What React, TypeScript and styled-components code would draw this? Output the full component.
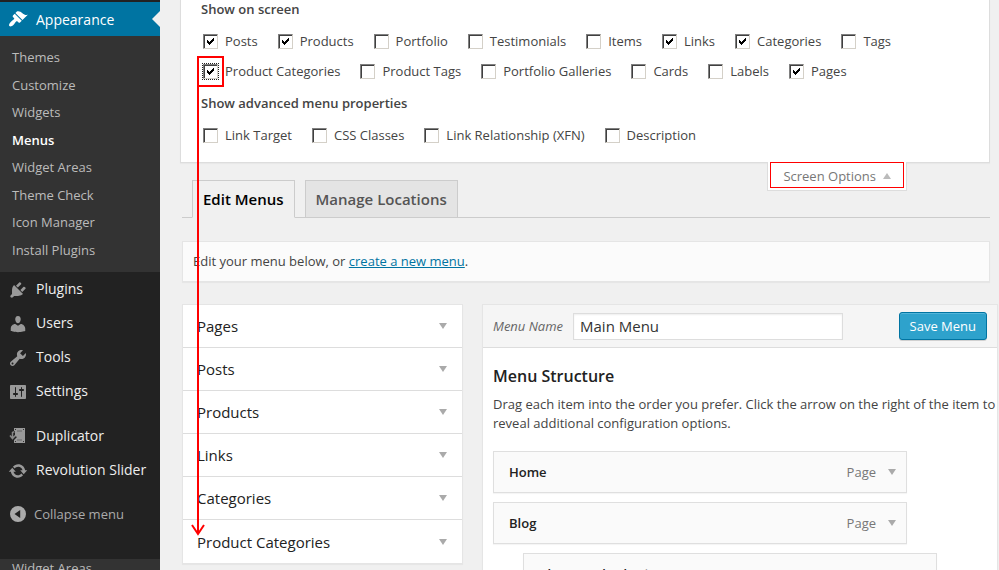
import React, { ReactNode } from 'react';
import styled, { createGlobalStyle, css } from 'styled-components';

const GlobalStyle = createGlobalStyle`
  *, *::before, *::after { box-sizing: border-box; }
  body {
    margin: 0;
    overflow: hidden;
    background: #f0f0f0;
    color: #444;
    font: 13px/19px "Open Sans", sans-serif;
  }
  button, input { font-family: inherit; }
  h2, h3, p, ul { margin: 0; padding: 0; }
  ul { list-style: none; }
`;

const Page = styled.div`
  display: flex;
  height: 100vh;
  overflow: hidden;
`;

/* ---------- Sidebar ---------- */

const Sidebar = styled.nav`
  flex: 0 0 160px;
  padding-top: 2px;
  background: #222;
  overflow: hidden;
`;

const MenuLink = styled.a<{ $current?: boolean }>`
  position: relative;
  display: flex;
  align-items: center;
  gap: 8px;
  height: 34px;
  padding-left: 8px;
  color: ${(p) => (p.$current ? '#fff' : '#eee')};
  background: ${(p) => (p.$current ? '#0074a2' : 'transparent')};
  font-size: 14px;
  white-space: nowrap;
  text-decoration: none;

  ${(p) =>
    p.$current &&
    css`
      &::after {
        content: '';
        position: absolute;
        right: 0;
        top: 9px;
        border: 8px solid transparent;
        border-left-width: 0;
        border-right-color: #f0f0f0;
      }
    `}
`;

const MenuLabel = styled.span`
  padding-bottom: 2px;
`;

const MenuIcon = styled.svg`
  flex: none;
  width: 20px;
  height: 20px;
`;

const Submenu = styled.ul`
  display: grid;
  grid-auto-rows: 1fr;
  height: 236px;
  padding: 7px 0 9px;
  background: #333;
`;

const SubLink = styled.a<{ $active?: boolean }>`
  display: block;
  padding: 5px 12px 4px;
  line-height: 18px;
  color: ${(p) => (p.$active ? '#fff' : '#bbb')};
  font-weight: ${(p) => (p.$active ? 600 : 400)};
  text-decoration: none;
`;

const MenuGap = styled.div`
  height: 11px;
`;

const CollapseButton = styled.button`
  display: flex;
  align-items: center;
  gap: 6px;
  width: 100%;
  height: 34px;
  margin: 10px 0 28px;
  padding: 0 0 0 8px;
  border: 0;
  background: none;
  color: #aaa;
  font-size: 13px;
`;

const SubmenuTail = styled.div`
  background: #333;

  a { padding-top: 0; }
`;

/* ---------- Content ---------- */

const Content = styled.main`
  flex: 1;
  min-width: 0;
`;

const ScreenMeta = styled.section`
  margin: 0 9px 0 20px;
  padding: 0 20px 12px;
  border: solid #ddd;
  border-width: 0 1px 1px;
  background: #fff;
  box-shadow: 0 1px 1px rgba(0, 0, 0, 0.03);
`;

const OptionGroup = styled.fieldset`
  margin: 0;
  padding: 0 0 0 2px;
  border: 0;

  & + & { margin-top: 8px; }
`;

const OptionLegend = styled.legend`
  margin-left: -2px;
  padding: 0 0 7px;
  font-weight: 600;
`;

const OptionList = styled.div`
  display: flex;
  flex-wrap: wrap;
  column-gap: 20px;
`;

const Option = styled.label`
  position: relative;
  display: flex;
  align-items: center;
  gap: 7px;
  height: 30px;
  white-space: nowrap;
`;

const Checkbox = styled.input<{ $focused?: boolean }>`
  appearance: none;
  flex: none;
  width: 15px;
  height: 15px;
  margin: 0;
  border: 1px solid;
  border-color: #808080 #d4d0c8 #d4d0c8 #808080;
  background: #fff center / 7px 7px no-repeat;
  box-shadow: inset 1px 1px 0 #404040;

  &:checked {
    background-image: url("data:image/svg+xml,%3Csvg xmlns='http://www.w3.org/2000/svg' viewBox='0 0 7 7' shape-rendering='crispEdges'%3E%3Cpath d='M0 2h1v1h1v1h1v-1h1v-1h1v-1h1v-1h1v3h-1v1h-1v1h-1v1h-1v1h-1v-1h-1v-1h-1z'/%3E%3C/svg%3E");
  }

  ${(p) =>
    p.$focused &&
    css`
      outline: 1px dotted #222;
    `}
`;

/* Red frame round the option, with an arrow running down to its box below */
const Callout = styled.span`
  position: absolute;
  z-index: 2;
  left: -6px;
  top: 0;
  width: 27px;
  height: 31px;
  border: 2px solid #f00;
  pointer-events: none;
`;

const CalloutArrow = styled.svg`
  position: absolute;
  left: -8px;
  top: 27px;
  width: 16px;
  height: 452px;
`;

const MetaTabRow = styled.div`
  display: flex;
  justify-content: flex-end;
  height: 18px;
  margin: -1px 92px 0 0;
`;

const MetaTab = styled.div`
  align-self: flex-start;
  position: relative;
  padding: 0 2px 2px;
  border: solid #ddd;
  border-width: 0 1px 1px;
  background: #fff;
`;

const MetaButton = styled.button`
  display: flex;
  align-items: center;
  gap: 7px;
  height: 26px;
  padding: 1px 12px 0;
  border: 1px solid #f00;
  background: #fff;
  color: #777;
  font-size: 13px;
`;

const Arrow = styled.span<{ $up?: boolean }>`
  flex: none;
  border: solid transparent;
  border-width: ${(p) => (p.$up ? '0 4px 6px' : '6px 4px 0')};
  border-${(p) => (p.$up ? 'bottom' : 'top')}-color: ${(p) => (p.$up ? '#bbb' : '#aaa')};
`;

const Tabs = styled.div`
  display: flex;
  gap: 10px;
  margin: 0 9px 23px 22px;
  padding-left: 10px;
  border-bottom: 1px solid #ccc;
`;

const Tab = styled.a<{ $active?: boolean }>`
  margin-bottom: -1px;
  padding: 6px 10px;
  border: 1px solid #ccc;
  border-bottom-color: ${(p) => (p.$active ? '#f0f0f0' : '#ccc')};
  background: ${(p) => (p.$active ? '#f0f0f0' : '#e4e4e4')};
  color: ${(p) => (p.$active ? '#000' : '#555')};
  font-size: 15px;
  font-weight: 600;
  line-height: 24px;
  text-decoration: none;
`;

const Notice = styled.p`
  margin: 0 9px 22px 22px;
  padding: 10px;
  border: 1px solid #e5e5e5;
  background: #fbfbfb;
  box-shadow: 0 1px 1px rgba(0, 0, 0, 0.04);

  a { color: #0074a2; }
`;

const Columns = styled.div`
  display: grid;
  grid-template-columns: 281px 1fr;
  gap: 19px;
  align-items: start;
  margin: 0 1px 0 22px;
`;

const panel = css`
  border: 1px solid #e5e5e5;
  background: #fff;
  box-shadow: 0 1px 1px rgba(0, 0, 0, 0.04);
`;

const Accordion = styled.div`
  ${panel}
`;

const AccordionButton = styled.button`
  display: flex;
  align-items: center;
  justify-content: space-between;
  width: 100%;
  height: 43px;
  padding: 0 15px 0 14px;
  border: 0;
  border-bottom: 1px solid #ddd;
  background: #fff;
  color: #222;
  font-size: 15px;

  &:last-child {
    border-bottom: 0;
  }
`;

const Editor = styled.section`
  ${panel}
`;

const EditorHeader = styled.header`
  display: flex;
  align-items: center;
  height: 43px;
  padding: 0 10px;
  border-bottom: 1px solid #ddd;
  background: #f5f5f5;
`;

const NameLabel = styled.label`
  color: #666;
  font-style: italic;
`;

const NameInput = styled.input`
  width: 270px;
  height: 27px;
  margin-left: 10px;
  padding: 0 6px;
  border: 1px solid #ddd;
  background: #fff;
  box-shadow: inset 0 1px 2px rgba(0, 0, 0, 0.07);
  color: #333;
  font-size: 15px;
`;

const SaveButton = styled.button`
  height: 28px;
  margin-left: auto;
  padding: 0 10px;
  border: 1px solid #0074a2;
  border-radius: 3px;
  background: #2ea2cc;
  box-shadow: inset 0 1px 0 rgba(120, 200, 230, 0.5), 0 1px 0 rgba(0, 0, 0, 0.15);
  color: #fff;
  font-size: 13px;
`;

const EditorBody = styled.div`
  padding: 16px 0 16px 10px;
`;

const EditorTitle = styled.h3`
  margin-bottom: 7px;
  color: #222;
  font-size: 16px;
  font-weight: 600;
  line-height: 24px;
`;

const ItemList = styled.ul`
  display: grid;
  gap: 9px;
  margin-top: 18px;
`;

const MenuItem = styled.li<{ $depth?: number }>`
  display: flex;
  align-items: center;
  width: 414px;
  height: 42px;
  margin-left: ${(p) => (p.$depth ?? 0) * 30}px;
  padding: 0 10px 0 15px;
  border: 1px solid #dfdfdf;
  background: #fafafa;
  box-shadow: 0 1px 1px rgba(0, 0, 0, 0.04);
`;

const ItemTitle = styled.span`
  flex: 1;
  color: #222;
  font-weight: 600;
`;

const SubItem = styled.span`
  color: #999;
  font-style: italic;
  font-weight: 400;
`;

const ItemType = styled.span`
  margin-right: 12px;
  color: #777;
`;

/* ---------- Icons ---------- */

const Icon = ({ children, color = '#999' }: { children: ReactNode; color?: string }) => (
  <MenuIcon viewBox="0 0 20 20" fill={color} aria-hidden="true">
    {children}
  </MenuIcon>
);

const brush = (
  <path d="M14.48 11.06L7.41 3.99l1.5-1.5c.5-.56 2.3-.47 3.51.32 1.21.8 1.43 1.28 2.91 2.1 1.18.64 2.45 1.26 4.45.85zm-.71.71L6.7 4.7 4.93 6.47c-.39.39-.39 1.02 0 1.41l1.06 1.06c.39.39.39 1.03 0 1.42-.6.6-1.43 1.11-2.21 1.69-.35.26-.7.53-1.01.84C1.43 14.23.4 16.08 1.4 17.07c.99 1 2.84-.03 4.18-1.36.31-.31.58-.66.85-1.02.57-.78 1.08-1.61 1.69-2.21.39-.39 1.02-.39 1.41 0l1.06 1.06c.39.39 1.02.39 1.41 0z" />
);
const plug = (
  <path transform="translate(0 1)" d="M13.11 4.36L9.87 7.6 8 5.73l3.24-3.24c.35-.34 1.05-.2 1.56.32.52.51.66 1.21.31 1.55zm-8 1.77l.91-1.12 9.01 9.01-1.19.84c-.71.71-2.63 1.16-3.82 1.16H6.14L4.9 17.26c-.59.59-1.54.59-2.12 0-.59-.58-.59-1.53 0-2.12l1.24-1.24v-3.88c0-1.13.4-3.19 1.09-3.89zm7.26 3.97l3.24-3.24c.34-.35 1.04-.21 1.55.31.52.51.66 1.21.31 1.55l-3.24 3.25z" />
);
const user = (
  <path transform="translate(0 1)" d="M10 9.25c-2.27 0-2.73-3.44-2.73-3.44C7 4.02 7.82 2 9.97 2c2.16 0 2.98 2.02 2.71 3.81 0 0-.41 3.44-2.68 3.44zm0 2.57L12.72 10c2.39 0 4.52 2.33 4.52 4.53v2.49s-3.65 1.13-7.24 1.13c-3.65 0-7.24-1.13-7.24-1.13v-2.49c0-2.25 1.94-4.48 4.47-4.48z" />
);
const wrench = (
  <path transform="translate(0 1)" d="M16.68 9.77c-1.34 1.34-3.3 1.67-4.95.99l-5.41 6.52c-.99.99-2.59.99-3.58 0s-.99-2.59 0-3.57l6.52-5.42c-.68-1.65-.35-3.61.99-4.95 1.28-1.28 3.12-1.62 4.72-1.06l-2.89 2.89 2.82 2.82 2.86-2.87c.53 1.58.18 3.39-1.08 4.65zM3.81 16.21c.4.39 1.04.39 1.43 0 .4-.4.4-1.04 0-1.43-.39-.4-1.03-.4-1.43 0-.39.39-.39 1.03 0 1.43z" />
);
const sliders = (
  <path transform="translate(0 1)" d="M18 16V4c0-.55-.45-1-1-1H3c-.55 0-1 .45-1 1v12c0 .55.45 1 1 1h14c.55 0 1-.45 1-1zM8 11h1c.55 0 1 .45 1 1s-.45 1-1 1H8v1.5c0 .28-.22.5-.5.5s-.5-.22-.5-.5V13H6c-.55 0-1-.45-1-1s.45-1 1-1h1V5.5c0-.28.22-.5.5-.5s.5.22.5.5V11zm5-2h-1c-.55 0-1-.45-1-1s.45-1 1-1h1V5.5c0-.28.22-.5.5-.5s.5.22.5.5V7h1c.55 0 1 .45 1 1s-.45 1-1 1h-1v5.5c0 .28-.22.5-.5.5s-.5-.22-.5-.5V9z" />
);
const duplicator = (
  <>
    <path d="M6 2h11v15H6v-3l3-3-2-1V5H6z" />
    <path d="M4.500 6v6M2 9.500l2.500 3 2.800-3M4.500 6h2" fill="none" stroke="#888" strokeWidth="1.500" />
    <path d="M9 5h5M9 14h5" stroke="#666" fill="none" />
    <path d="M7 3h1v1H7zM15 3h1v1h-1zM15 15h1v1h-1zM7 15h1v1H7z" fill="#333" />
  </>
);
const cycle = (
  <path transform="translate(0 1)" d="M10.200 3.280c3.530 0 6.430 2.610 6.920 6h2.080l-3.500 4-3.500-4h2.320c-.450-1.970-2.210-3.450-4.320-3.450-1.450 0-2.730.71-3.540 1.780L4.950 5.660C6.230 4.200 8.110 3.280 10.200 3.280zm-.4 13.440c-3.520 0-6.430-2.610-6.920-6H.8l3.500-4c1.170 1.330 2.330 2.670 3.500 4H5.480c.45 1.970 2.210 3.450 4.320 3.450 1.450 0 2.730-.71 3.540-1.780l1.710 1.950c-1.280 1.460-3.150 2.380-5.250 2.380z" />
);
const collapse = (
  <path
    fillRule="evenodd"
    d="M10 2a8 8 0 1 0 0 16 8 8 0 0 0 0-16zM12.200 6v8L6.500 10z"
  />
);

/* ---------- Data ---------- */

const appearanceLinks = [
  'Themes', 'Customize', 'Widgets', 'Menus', 'Widget Areas', 'Theme Check', 'Icon Manager', 'Install Plugins',
];

const coreLinks: [string, ReactNode][] = [
  ['Plugins', plug],
  ['Users', user],
  ['Tools', wrench],
  ['Settings', sliders],
];

const pluginLinks: [string, ReactNode][] = [
  ['Duplicator', duplicator],
  ['Revolution Slider', cycle],
];

type ScreenOption = { label: string; on?: boolean; marked?: boolean };

const screenOptions: ScreenOption[] = [
  { label: 'Posts', on: true },
  { label: 'Products', on: true },
  { label: 'Portfolio' },
  { label: 'Testimonials' },
  { label: 'Items' },
  { label: 'Links', on: true },
  { label: 'Categories', on: true },
  { label: 'Tags' },
  { label: 'Product Categories', on: true, marked: true },
  { label: 'Product Tags' },
  { label: 'Portfolio Galleries' },
  { label: 'Cards' },
  { label: 'Labels' },
  { label: 'Pages', on: true },
];

const advancedOptions: ScreenOption[] = [
  { label: 'Link Target' },
  { label: 'CSS Classes' },
  { label: 'Link Relationship (XFN)' },
  { label: 'Description' },
];

const boxes = ['Pages', 'Posts', 'Products', 'Links', 'Categories', 'Product Categories'];

const Options = ({ title, items }: { title: string; items: ScreenOption[] }) => (
  <OptionGroup>
    <OptionLegend>{title}</OptionLegend>
    <OptionList>
      {items.map((o) => (
        <Option key={o.label}>
          <Checkbox type="checkbox" defaultChecked={o.on} $focused={o.marked} />
          {o.label}
          {o.marked && (
            <Callout>
              <CalloutArrow viewBox="0 0 16 452" fill="none" stroke="#f00" strokeWidth="2">
                <path d="M7 0v449" />
                <path d="M1 440l6 9 6-9" />
              </CalloutArrow>
            </Callout>
          )}
        </Option>
      ))}
    </OptionList>
  </OptionGroup>
);

export default function App() {
  return (
    <>
      <GlobalStyle />
      <Page>
        <Sidebar>
          <MenuLink href="#appearance" $current>
            <Icon color="#fff">{brush}</Icon>
            Appearance
          </MenuLink>
          <Submenu>
            {appearanceLinks.map((name) => (
              <li key={name}>
                <SubLink href="#" $active={name === 'Menus'}>{name}</SubLink>
              </li>
            ))}
          </Submenu>
          {coreLinks.map(([name, icon]) => (
            <MenuLink key={name} href="#">
              <Icon>{icon}</Icon>
              <MenuLabel>{name}</MenuLabel>
            </MenuLink>
          ))}
          <MenuGap />
          {pluginLinks.map(([name, icon]) => (
            <MenuLink key={name} href="#">
              <Icon>{icon}</Icon>
              <MenuLabel>{name}</MenuLabel>
            </MenuLink>
          ))}
          <CollapseButton type="button">
            <Icon color="#aaa">{collapse}</Icon>
            Collapse menu
          </CollapseButton>
          <SubmenuTail>
            <SubLink href="#">Widget Areas</SubLink>
          </SubmenuTail>
        </Sidebar>

        <Content>
          <ScreenMeta>
            <Options title="Show on screen" items={screenOptions} />
            <Options title="Show advanced menu properties" items={advancedOptions} />
          </ScreenMeta>
          <MetaTabRow>
            <MetaTab>
              <MetaButton type="button">
                Screen Options
                <Arrow $up />
              </MetaButton>
            </MetaTab>
          </MetaTabRow>

          <Tabs>
            <Tab href="#edit" $active>Edit Menus</Tab>
            <Tab href="#locations">Manage Locations</Tab>
          </Tabs>

          <Notice>
            Edit your menu below, or <a href="#new">create a new menu</a>.
          </Notice>

          <Columns>
            <Accordion>
              {boxes.map((name) => (
                <AccordionButton key={name} type="button">
                  {name}
                  <Arrow />
                </AccordionButton>
              ))}
            </Accordion>

            <Editor>
              <EditorHeader>
                <NameLabel htmlFor="menu-name">Menu Name</NameLabel>
                <NameInput id="menu-name" type="text" defaultValue="Main Menu" />
                <SaveButton type="button">Save Menu</SaveButton>
              </EditorHeader>
              <EditorBody>
                <EditorTitle>Menu Structure</EditorTitle>
                <p>
                  Drag each item into the order you prefer. Click the arrow on the right of the item to
                  reveal additional configuration options.
                </p>
                <ItemList>
                  <MenuItem>
                    <ItemTitle>Home</ItemTitle>
                    <ItemType>Page</ItemType>
                    <Arrow />
                  </MenuItem>
                  <MenuItem>
                    <ItemTitle>Blog</ItemTitle>
                    <ItemType>Page</ItemType>
                    <Arrow />
                  </MenuItem>
                  <MenuItem $depth={1}>
                    <ItemTitle>
                      Blog Standard <SubItem>sub item</SubItem>
                    </ItemTitle>
                    <ItemType>Page</ItemType>
                    <Arrow />
                  </MenuItem>
                </ItemList>
              </EditorBody>
            </Editor>
          </Columns>
        </Content>
      </Page>
    </>
  );
}
